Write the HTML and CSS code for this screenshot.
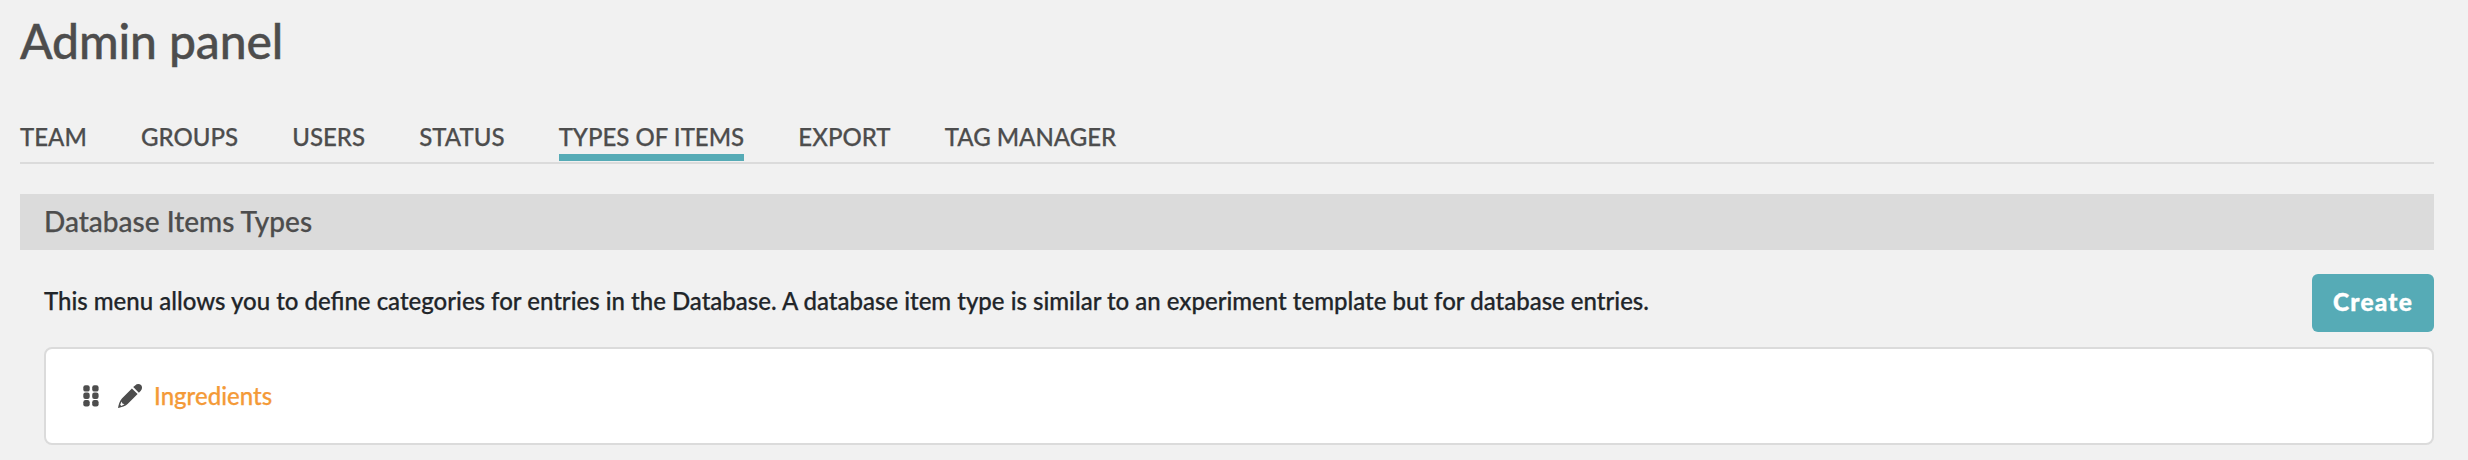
FILE: index.html
```html
<!DOCTYPE html>
<html lang="en">
<head>
<meta charset="utf-8">
<title>Admin panel</title>
<link rel="stylesheet" href="styles.css">
</head>
<body>
<main class="page">
  <h1 class="page-title">Admin panel</h1>
  <nav class="tabs">
    <a class="tab">TEAM</a>
    <a class="tab">GROUPS</a>
    <a class="tab">USERS</a>
    <a class="tab">STATUS</a>
    <a class="tab tab-selected">TYPES OF ITEMS</a>
    <a class="tab">EXPORT</a>
    <a class="tab">TAG MANAGER</a>
  </nav>
  <h2 class="section-title">Database Items Types</h2>
  <div class="intro">
    <p class="intro-text">This menu allows you to define categories for entries in the Database. A database item type is similar to an experiment template but for database entries.</p>
    <button class="create" type="button">Create</button>
  </div>
  <ul class="types">
    <li class="type">
      <svg class="grip" viewBox="0 0 16 22" width="16" height="22" fill="#4d4d4d">
        <rect x="0.3" y="0.2" width="6.4" height="6.4" rx="2.2"/><rect x="9.200" y="0.2" width="6.4" height="6.4" rx="2.2"/>
        <rect x="0.3" y="7.600" width="6.4" height="6.4" rx="2.2"/><rect x="9.200" y="7.600" width="6.4" height="6.4" rx="2.2"/>
        <rect x="0.3" y="15" width="6.4" height="6.4" rx="2.2"/><rect x="9.200" y="15" width="6.4" height="6.4" rx="2.2"/>
      </svg>
      <svg class="pencil" viewBox="0 0 24 24" width="24" height="24" fill="#4d4d4d">
        <path d="M13.900 4.400 19.600 10.100 9.600 20.100C7.400 22.200 3.600 23.400 0.400 23.900 0 23.900 0 23.800 0.100 23.500 0.600 20.300 1.800 16.600 3.900 14.400Z"/>
        <path d="M15.200 3.100 17.100 1.400C18.900 -0.300 21.500 -0.300 23 1.100 24.400 2.600 24.400 5.100 22.600 6.900L20.900 8.800Z"/>
        <path fill="#fff" d="M3.600 17.500 4.400 19.500 6.500 20.300 3.300 21.900 2.200 20.800Z"/>
      </svg>
      <a class="type-name">Ingredients</a>
    </li>
  </ul>
</main>
</body>
</html>
```
FILE: styles.css
```css
* { box-sizing: border-box; }
body {
  margin: 0;
  background: #f1f1f1;
  color: #212529;
  font-family: Lato, sans-serif;
  font-size: 24px;
  font-weight: 500;
  -webkit-text-stroke: 0.25px currentColor;
}
.page { padding: 12px 34px 15px 20px; }
.page-title {
  margin: 0 0 48px;
  color: #4d4d4d;
  font-size: 48px;
  font-weight: 500;
  letter-spacing: -0.1px;
  line-height: 58px;
  -webkit-text-stroke-width: 0.4px;
}
.tabs {
  display: flex;
  gap: 54.2px;
  height: 46px;
  border-bottom: 2px solid #dbdbdb;
  color: #4d4d4d;
}
.tab {
  height: 43px;
  line-height: 38px;
  white-space: nowrap;
}
.tab-selected { border-bottom: 7px solid #56abb6; }
.section-title {
  height: 56px;
  margin: 30px 0 24px;
  padding-left: 24px;
  background: #dbdbdb;
  color: #4d4d4d;
  font-size: 28px;
  font-weight: 500;
  line-height: 54px;
}
.intro {
  display: flex;
  justify-content: space-between;
  height: 58px;
  margin-bottom: 15px;
  padding-left: 24px;
}
.intro-text { margin: 0; line-height: 53px; white-space: nowrap; }
.create {
  width: 122px;
  border: 0;
  border-radius: 6px;
  background: #56abb6;
  color: #fff;
  font-family: inherit;
  font-size: 24.5px;
  font-weight: 900;
  letter-spacing: 1.2px;
  line-height: 56px;
  padding: 0 0 2px;
  -webkit-text-stroke: 0.4px #fff;
}
.types { margin: 0 0 0 24px; padding: 0; list-style: none; }
.type {
  display: flex;
  align-items: center;
  height: 98px;
  padding-left: 37px;
  border: 2px solid #dbdbdb;
  border-radius: 8px;
  background: #fff;
}
.pencil { margin: 0 12px 0 19px; }
.type-name { padding-bottom: 2px; color: #f49a38; }
```
